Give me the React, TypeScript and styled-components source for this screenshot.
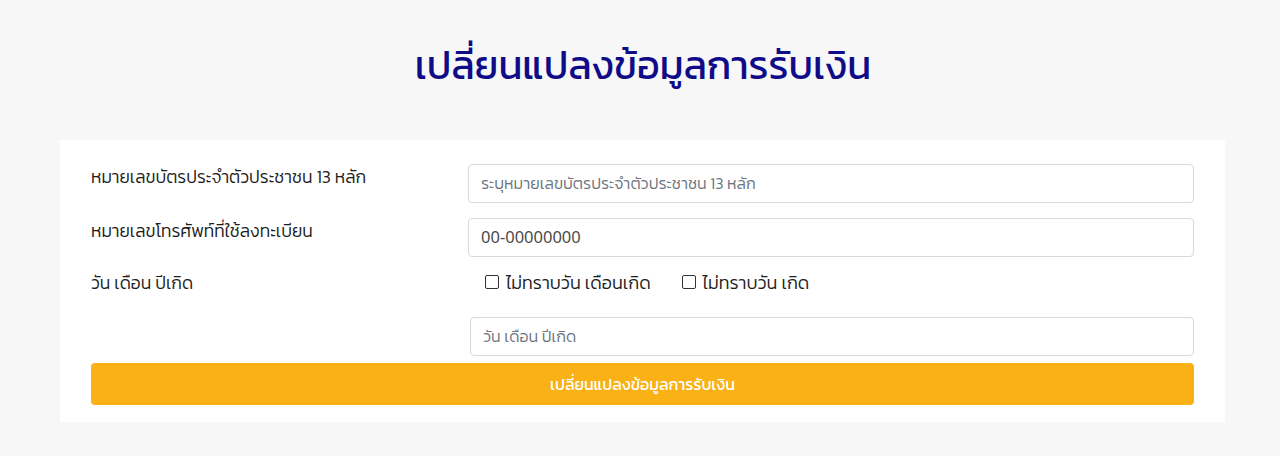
import React from "react";
import styled, { createGlobalStyle } from "styled-components";

const Global = createGlobalStyle`
  html, body { margin: 0; padding: 0; background: #f7f7f7; }
  * { box-sizing: border-box; }
  body { font-family: "Kanit", "Noto Sans Thai", "Noto Sans", "DejaVu Sans", sans-serif; }
`;

const Page = styled.div`
  min-height: 456px;
  background: #f7f7f7;
  padding-top: 32px;
`;

const Title = styled.h1`
  margin: 0 0 40px;
  padding-left: 6px;
  text-align: center;
  font-size: 39.5px;
  font-weight: 400;
  line-height: 68px;
  color: #100c88;
`;

const Card = styled.div`
  margin-left: 60px;
  width: 1165px;
  background: #fff;
  padding: 24px 31px 17px;
`;

const Row = styled.div<{ $gap?: number }>`
  display: grid;
  grid-template-columns: 377px 1fr;
  align-items: start;
  margin-bottom: ${(p) => p.$gap ?? 15}px;
`;

const Label = styled.label`
  font-size: 17.5px;
  font-weight: 300;
  color: #1e1e1e;
  line-height: 24px;
  padding-top: 1px;
`;

const Input = styled.input<{ $inset?: number }>`
  width: calc(100% - ${(p) => p.$inset ?? 0}px);
  margin-left: ${(p) => p.$inset ?? 0}px;
  height: 39px;
  border: 1px solid #d6d9dd;
  border-radius: 4px;
  padding: 0 12px;
  font-family: "Noto Sans Thai", "Noto Sans", sans-serif;
  font-size: 16.5px;
  font-weight: 400;
  color: #4a4a4a;
  background: #fff;
  outline: none;
  &::placeholder {
    font-family: "Kanit", "Noto Sans Thai", sans-serif;
    font-weight: 300;
    color: #6c757d;
    font-size: 16px;
  }
`;

const CheckGroup = styled.div`
  display: flex;
  align-items: center;
  gap: 31px;
  padding-left: 17px;
  height: 24px;
`;

const CheckItem = styled.label`
  display: flex;
  align-items: center;
  gap: 7px;
  font-size: 18px;
  font-weight: 300;
  color: #1e1e1e;
`;

const Box = styled.span`
  width: 14px;
  height: 14px;
  border: 1.5px solid #333;
  border-radius: 2px;
  background: #fff;
`;

const Button = styled.button`
  display: block;
  width: 100%;
  height: 42px;
  border: none;
  border-radius: 4px;
  background: #f9b115;
  color: #fff;
  font-family: inherit;
  font-size: 16px;
  font-weight: 400;
`;

export default function App() {
  return (
    <>
      <Global />
      <Page>
        <Title>เปลี่ยนแปลงข้อมูลการรับเงิน</Title>
        <Card>
          <Row>
            <Label>หมายเลขบัตรประจำตัวประชาชน 13 หลัก</Label>
            <Input placeholder="ระบุหมายเลขบัตรประจำตัวประชาชน 13 หลัก" />
          </Row>
          <Row $gap={13}>
            <Label>หมายเลขโทรศัพท์ที่ใช้ลงทะเบียน</Label>
            <Input defaultValue="00-00000000" />
          </Row>
          <Row $gap={22}>
            <Label>วัน เดือน ปีเกิด</Label>
            <CheckGroup>
              <CheckItem><Box />ไม่ทราบวัน เดือนเกิด</CheckItem>
              <CheckItem><Box />ไม่ทราบวัน เกิด</CheckItem>
            </CheckGroup>
          </Row>
          <Row $gap={7}>
            <span />
            <Input $inset={2} placeholder="วัน เดือน ปีเกิด" />
          </Row>
          <Button>เปลี่ยนแปลงข้อมูลการรับเงิน</Button>
        </Card>
      </Page>
    </>
  );
}
